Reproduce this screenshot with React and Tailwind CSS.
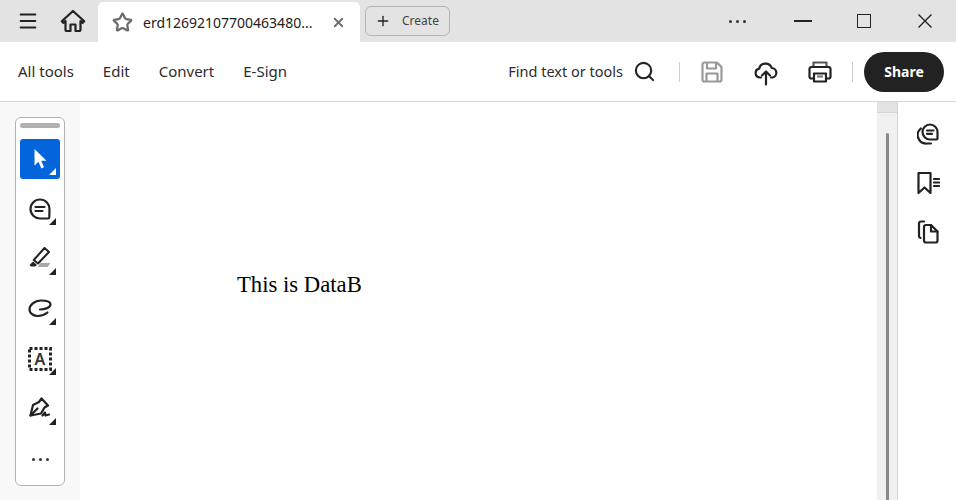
import React from 'react';
import { Menu, Star, X, Plus, Search } from 'lucide-react';

const NavLink = ({ children }) => (
  <span className="text-[15px] text-[#2c2c2c] leading-none">{children}</span>
);

// little black corner mark on tools that have a flyout
const Corner = ({ white }) => (
  <svg width="7" height="7" viewBox="0 0 7 7" className="absolute right-[4px] bottom-[4px]">
    <polygon points="7,0 7,7 0,7" fill={white ? '#ffffff' : '#222222'} />
  </svg>
);

const Tool = ({ active, corner = true, children }) => (
  <div className={`relative w-10 h-10 rounded-[3px] flex items-center justify-center ${active ? 'bg-[#0265dc]' : ''}`}>
    {children}
    {corner && <Corner white={active} />}
  </div>
);

const Dots = () => (
  <div className="flex items-center gap-1">
    <div className="w-[3px] h-[3px] rounded-full bg-[#333]" />
    <div className="w-[3px] h-[3px] rounded-full bg-[#333]" />
    <div className="w-[3px] h-[3px] rounded-full bg-[#333]" />
  </div>
);

const CommentIcon = () => (
  <svg width="22" height="22" viewBox="0 0 22 22" fill="none" stroke="#222" strokeWidth="2.2" strokeLinecap="round" strokeLinejoin="round">
    <path d="M11 1.500a9.500 9.500 0 1 0 0 19h8a1.300 1.300 0 0 0 1.300-1.300L20.500 11a9.500 9.500 0 0 0-9.500-9.500Z" />
    <path d="M6.500 9h9M6.500 13h7" />
  </svg>
);

const HighlightIcon = () => (
  <svg width="24" height="24" viewBox="0 0 24 24" fill="none">
    <path d="M16.500 1 21 5 10 16.500 5.800 13Z" stroke="#222" strokeWidth="2" strokeLinejoin="round" />
    <path d="M1.500 18 5 14.500l4 3.500-2 1.500H3Z" fill="#222" />
    <path d="M12.500 16h10l-3 4h-10Z" fill="#a8a8a8" />
  </svg>
);

const LassoIcon = () => (
  <svg width="24" height="20" viewBox="0 0 24 20" fill="none" stroke="#222" strokeWidth="2.2" strokeLinecap="round">
    <path d="M12 10.500C17 10.500 22.500 8.500 22.500 5.500 22.500 2.500 17 1.500 13 1.500 6.500 1.500 1.500 6 1.500 10.500 1.500 14.500 6 17 10 17 13.500 17 17 15.500 19.500 13.500" />
  </svg>
);

const TextBoxIcon = () => (
  <svg width="24" height="24" viewBox="0 0 24 24">
    <rect x="1.500" y="1.500" width="21" height="21" fill="none" stroke="#222" strokeWidth="3" strokeDasharray="3 2" />
    <text x="12" y="18" textAnchor="middle" fontSize="16" fontWeight="600" fill="#333" fontFamily="Noto Sans, sans-serif">A</text>
  </svg>
);

const PenIcon = () => (
  <svg width="24" height="24" viewBox="0 0 24 24" fill="none" stroke="#222" strokeWidth="2.200" strokeLinecap="round" strokeLinejoin="round">
    <path d="M13.500 1.500 20 8.500 16.500 10.500 13 16.500 2.500 18.500 5 8 11 5Z" />
    <path d="M2.500 18.500 9.500 11.500" />
    <path d="M14.500 18.500 17 15.500l.5 3 3.500-1" />
  </svg>
);

const SaveIcon = () => (
  <svg width="22" height="22" viewBox="0 0 22 22" fill="none" stroke="#999" strokeWidth="2.200" strokeLinejoin="round">
    <path d="M3.500 1.500H16L20.500 6V18.500a2 2 0 0 1-2 2H3.500a2 2 0 0 1-2-2V3.500a2 2 0 0 1 2-2Z" />
    <path d="M6 1.500V7.500H15V1.500" />
    <path d="M5.500 20.500V12.500H16.500V20.500" />
  </svg>
);

const CloudIcon = () => (
  <svg width="24" height="26" viewBox="0 0 24 26" fill="none" stroke="#222" strokeWidth="2.200" strokeLinecap="round" strokeLinejoin="round">
    <path d="M7 17.500H6a4.500 4.500 0 0 1-.8-8.900A6.500 6.500 0 0 1 17.700 8 4.800 4.800 0 0 1 18.500 17.500H17" />
    <path d="M12 24.500V12M8 15.500 12 11.500 16 15.500" />
  </svg>
);

const PrintIcon = () => (
  <svg width="24" height="24" viewBox="0 0 24 24" fill="none" stroke="#222" strokeWidth="2.200" strokeLinejoin="round">
    <path d="M5.500 7V2.500H18.500V7" stroke="#555" />
    <path d="M5.500 18.500H3.500a2 2 0 0 1-2-2V9a2 2 0 0 1 2-2H20.500a2 2 0 0 1 2 2V16.500a2 2 0 0 1-2 2H18.500" />
    <path d="M6 13.500H18V21.500H6Z" />
    <path d="M9 16.500H15" stroke="#777" />
  </svg>
);

const CommentsRailIcon = () => (
  <svg width="22" height="22" viewBox="0 0 22 22" fill="none" stroke="#222" strokeWidth="2.200" strokeLinecap="round" strokeLinejoin="round">
    <path d="M13 1.500a7.500 7.500 0 1 0 0 15h6.500a1 1 0 0 0 1-1L20.500 9A7.500 7.500 0 0 0 13 1.500Z" />
    <path d="M10 7.500h6.500M10 10.800h5" />
    <path d="M3.800 5.500a8.500 8.500 0 0 0 6.200 15h4" />
  </svg>
);

const BookmarkIcon = () => (
  <svg width="24" height="24" viewBox="0 0 24 24" fill="none" stroke="#222" strokeWidth="2.200" strokeLinecap="round" strokeLinejoin="round">
    <path d="M2.500 2H14.500V22L8.500 16.500 2.500 22Z" />
    <path d="M18 8h5M18 11.500h5M18 15h5" />
  </svg>
);

const PagesIcon = () => (
  <svg width="22" height="24" viewBox="0 0 22 24" fill="none" stroke="#222" strokeWidth="2.200" strokeLinecap="round" strokeLinejoin="round">
    <path d="M7 1.500H4a2 2 0 0 0-2 2V16a2 2 0 0 0 1.500 2" />
    <path d="M7 7a2 2 0 0 1 2-2h5l6.500 6.500V20.500a2 2 0 0 1-2 2H9a2 2 0 0 1-2-2Z" />
    <path d="M14 5v6.500h6.500" />
  </svg>
);

export default function App() {
  return (
    <div className="w-[956px] h-[500px] flex flex-col overflow-hidden bg-white font-['Noto_Sans',sans-serif]">
      {/* Title bar with tab */}
      <div className="h-[42px] shrink-0 bg-[#e3e3e3] flex items-center">
        <div className="w-[98px] shrink-0 flex items-center pl-[17px]">
          <Menu size={22} strokeWidth={2.2} className="text-[#222]" />
          <svg width="26" height="26" viewBox="0 0 26 26" fill="none" stroke="#222" strokeWidth="2.200" strokeLinejoin="round" className="ml-[21px]">
            <path d="M13 3 1.800 13.200l1.500 1.600L5.500 13v8.500a1.500 1.500 0 0 0 1.500 1.500h3.500V16.500h5V23H19a1.500 1.500 0 0 0 1.500-1.500V13l2.200 1.800 1.500-1.600Z" />
          </svg>
        </div>
        <div className="w-[262px] h-10 self-end bg-white rounded-t-[5px] flex items-center shrink-0 pl-[14px] pr-[14px]">
          <Star size={21} strokeWidth={2.6} className="text-[#6b6b6b] shrink-0" />
          <span className="ml-[10px] text-[14px] text-[#222] truncate w-[170px]">erd12692107700463480...</span>
          <X size={15} strokeWidth={3} className="text-[#6e6e6e] ml-auto" />
        </div>
        <div className="ml-[5px] w-[85px] h-[30px] border border-[#b3b3b3] rounded-[6px] flex items-center pl-[9px] gap-[11px] shrink-0">
          <Plus size={16} strokeWidth={2} className="text-[#222]" />
          <span className="text-[12px] text-[#444]">Create</span>
        </div>
        <div className="ml-auto flex items-center pr-[24px]">
          <Dots />
          <div className="w-[18px] h-[2px] bg-[#222] ml-[48px]" />
          <div className="w-[14px] h-[14px] border-[1.5px] border-[#222] ml-[45px]" />
          <svg width="14" height="14" viewBox="0 0 14 14" stroke="#222" strokeWidth="1.400" className="ml-[47px]">
            <path d="M.5.5l13 13M13.500.5l-13 13" />
          </svg>
        </div>
      </div>

      {/* Main toolbar */}
      <div className="h-[60px] shrink-0 border-b border-[#d5d5d5] flex items-center pl-[18px] pr-[12px]">
        <div className="flex items-center gap-[29px]">
          <NavLink>All tools</NavLink>
          <NavLink>Edit</NavLink>
          <NavLink>Convert</NavLink>
          <NavLink>E-Sign</NavLink>
        </div>
        <div className="ml-auto flex items-center">
          <span className="text-[14.5px] text-[#2c2c2c] leading-none">Find text or tools</span>
          <Search size={23} strokeWidth={2.2} className="text-[#222] ml-[10px]" />
          <div className="w-px h-[20px] bg-[#cfcfcf] ml-[23px]" />
          <div className="ml-[21px]"><SaveIcon /></div>
          <div className="ml-[31px] mt-[2px]"><CloudIcon /></div>
          <div className="ml-[30px]"><PrintIcon /></div>
          <div className="w-px h-[20px] bg-[#cfcfcf] ml-[20px]" />
          <div className="ml-[11px] w-20 h-10 rounded-full bg-[#222] text-white text-[14px] font-bold flex items-center justify-center">Share</div>
        </div>
      </div>

      <div className="flex-1 flex min-h-0">
        {/* Left tools */}
        <div className="w-20 shrink-0 bg-[#f8f8f8] pt-[15px] pl-[15px]">
          <div className="w-[50px] h-[369px] bg-white border border-[#b3b3b3] rounded-[6px] flex flex-col items-center pt-[5px]">
            <div className="w-10 h-[5px] rounded-full bg-[#b1b1b1] mb-[11px]" />
            <div className="flex flex-col gap-[10px]">
              <Tool active>
                <svg width="16" height="22" viewBox="0 0 16 22"><path d="M2.500 1v16.500l4-3.700 2.800 6.700 2.700-1.200-2.800-6.500h5.300Z" fill="#fff" /></svg>
              </Tool>
              <Tool><CommentIcon /></Tool>
              <Tool><HighlightIcon /></Tool>
              <Tool><LassoIcon /></Tool>
              <Tool><TextBoxIcon /></Tool>
              <Tool><PenIcon /></Tool>
              <Tool corner={false}><Dots /></Tool>
            </div>
          </div>
        </div>

        {/* Page */}
        <div className="w-[797px] shrink-0 pl-[157px] pt-[169px]">
          <p className="font-['Liberation_Serif',serif] text-[22.7px] leading-[28px] text-black">This is DataB</p>
        </div>

        {/* Scrollbar */}
        <div className="w-[21px] shrink-0 bg-[#f0f0f0] border-r border-[#d5d5d5] flex flex-col items-center">
          <div className="w-full h-[11px] bg-[#e3e3e3] border-b border-[#d5d5d5]" />
          <div className="w-[3px] flex-1 mt-[20px] bg-[#8a8a8a] rounded-t-full" />
        </div>

        {/* Right rail */}
        <div className="flex-1 flex flex-col items-center pt-[21px] pl-[1px] gap-[25.5px]">
          <CommentsRailIcon />
          <BookmarkIcon />
          <PagesIcon />
        </div>
      </div>
    </div>
  );
}
